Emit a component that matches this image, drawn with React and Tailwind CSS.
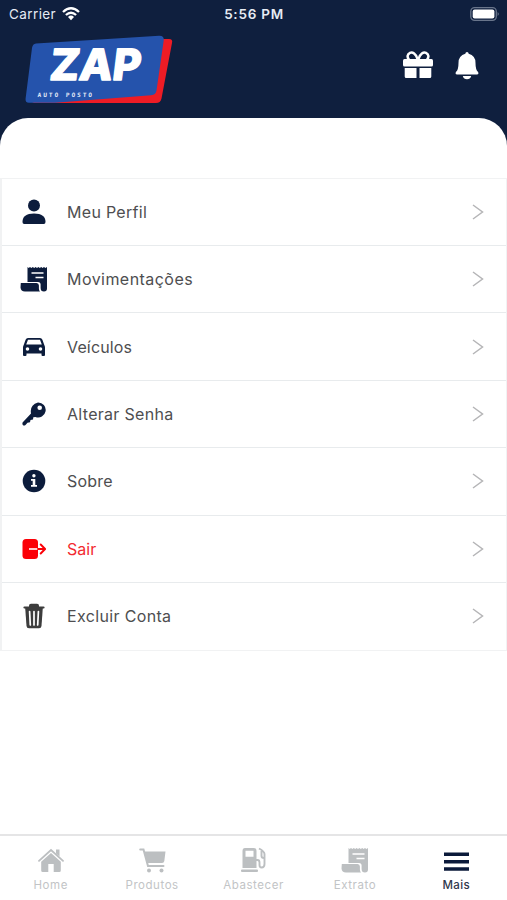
function Svg({ w, h, children, className }) {
  return (
    <svg width={w} height={h} viewBox={`0 0 ${w} ${h}`} className={`block ${className || ""}`} fill="currentColor">
      {children}
    </svg>
  );
}

function Logo() {
  return (
    <svg width="150" height="72" viewBox="24 33 150 72" className="block" fontFamily="Inter, sans-serif">
      <path d="M150 39H169Q173 39 172 43L161.500 98.500Q160.500 103 156 103H32L40 99Z" fill="#ee1c25" />
      <path d="M36 43.500L159 35.700Q164.500 35.500 163.700 40.500L156.500 90.500Q155.800 95 151 95.200L55 102.700H29Q25 102.700 25.600 98.500L32 48Q32.600 43.800 36 43.500Z" fill="#2553ac" />
      <text transform="translate(48.500 80.300) skewX(-7)" fontSize="43" fontWeight="800" fill="#fff" stroke="#fff" strokeWidth="1.400" strokeLinejoin="round" textLength="91" lengthAdjust="spacingAndGlyphs">ZAP</text>
      <text transform="translate(37.500 97.200) skewX(-3)" fontFamily="'DejaVu Sans Mono', monospace" fontSize="6" fontWeight="700" fill="#e4ebf8" textLength="54.500" lengthAdjust="spacing">AUTO POSTO</text>
    </svg>
  );
}

function Person() {
  return (
    <Svg w={24} h={26}>
      <circle cx="12" cy="6.500" r="6" />
      <path d="M.5 23Q.5 14.500 12 14.500Q23.500 14.500 23.500 23Q23.500 25 21.800 25H2.200Q.5 25 .5 23Z" />
    </Svg>
  );
}

function Key() {
  return (
    <Svg w={24} h={24}>
      <path fillRule="evenodd" d="M16 .5A7.500 7.500 0 1 1 13.500 15L11.300 15.200L11 17.500L8.500 18L8 20.300L5.500 20.800L3.500 23Q2 24 .8 23Q0 21.500 .8 20.300L9 11.500Q7.500 3 16 .5ZM17.700 3.500A2.300 2.300 0 1 0 17.700 8.100A2.300 2.300 0 1 0 17.700 3.500Z" />
    </Svg>
  );
}

function Receipt() {
  return (
    <Svg w={28} h={26}>
      <path d="M7.500 1l1.200 1 1.300-1 1.400 1 1.400-1 1.400 1 1.400-1 1.400 1 1.400-1 1.400 1 1.400-1 1.400 1 1.400-1 1.400 1L27 1V22.500Q27 25.500 24 25.500Q20.600 25.500 20.600 22V18.600Q20.600 16 18 16H7.500Z" />
      <path d="M.8 17H16.500Q18.900 17 18.900 19.500V22.500Q18.900 24.500 20 25.500H5Q.8 25.500.5 21.500Z" />
      <path d="M11.500 7H23.500M15.500 11.500H23.500" stroke="#fff" strokeWidth="1.600" />
    </Svg>
  );
}

function Car() {
  return (
    <Svg w={22} h={20}>
      <path fillRule="evenodd" d="M5 1H17Q18.700 1 19.400 2.700L21.300 8Q22 9 22 10.500V18Q22 19 21 19H19.500Q18.500 19 18.500 18V16.500H3.500V18Q3.500 19 2.500 19H1Q0 19 0 18V10.500Q0 9 .7 8L2.600 2.700Q3.300 1 5 1ZM5 2.800L3.200 7.500H18.800L17 2.800ZM4.500 10.200A1.800 1.800 0 1 0 4.500 13.800A1.800 1.800 0 1 0 4.500 10.200ZM17.500 10.200A1.800 1.800 0 1 0 17.500 13.800A1.800 1.800 0 1 0 17.500 10.200Z" />
    </Svg>
  );
}

function Info() {
  return (
    <Svg w={24} h={24}>
      <circle cx="12" cy="12" r="11.300" />
      <circle cx="11.900" cy="6.800" r="1.700" fill="#fff" />
      <path d="M9 10H13.300V16H15V17.800H9V16H10.700V11.800H9Z" fill="#fff" />
    </Svg>
  );
}

function Exit() {
  return (
    <Svg w={24} h={22}>
      <path d="M4 1H12.500Q16 1 16 4.500V17.500Q16 21 12.500 21H4Q.5 21 .5 17.500V4.500Q.5 1 4 1Z" />
      <path d="M7 11H16" stroke="#fff" strokeWidth="1.600" />
      <path d="M16 11H23M18.700 6.500L23.100 11L18.700 15.500" fill="none" stroke="currentColor" strokeWidth="1.900" strokeLinecap="round" strokeLinejoin="round" />
    </Svg>
  );
}

function Trash() {
  return (
    <Svg w={22} h={26}>
      <path d="M6 4V2.500Q6 .7 8 .7H14Q16 .7 16 2.500V4Z" />
      <path d="M1.500 4.500H20.500" fill="none" stroke="currentColor" strokeWidth="2.200" strokeLinecap="round" />
      <path d="M2.200 5H19.800L18.500 23Q18.300 25.300 16 25.300H6Q3.700 25.300 3.500 23Z" />
      <path d="M6.600 8.500L7.300 22M11 8.500V22M15.400 8.500L14.700 22" stroke="#fff" strokeWidth="1.700" strokeLinecap="round" />
    </Svg>
  );
}

function Bell() {
  return (
    <Svg w={24} h={28}>
      <path d="M12 0Q13.500 0 13.700 1.800Q20.500 3.500 20.500 11Q20.500 18 23.100 20Q24 22.500 22 22.500H2Q0 22.500.9 20Q3.500 18 3.500 11Q3.500 3.500 10.300 1.800Q10.500 0 12 0Z" />
      <path d="M7.800 24H16.200Q15.300 27.300 12 27.300Q8.700 27.300 7.800 24Z" />
    </Svg>
  );
}

function Gift() {
  return (
    <Svg w={30} h={28}>
      <path d="M14.500 8C13 2.500 9.500.8 7 1.800C4 3.200 4 6.500 6 8.500M15.500 8C17 2.500 20.500.8 23 1.800C26 3.200 26 6.500 24 8.500" fill="none" stroke="currentColor" strokeWidth="2.500" />
      <rect y="8" width="30" height="7.500" rx="1.500" />
      <path d="M1.700 17H13.500V27H3.200Q1.700 27 1.700 25.500ZM16.500 17H28.300V25.500Q28.300 27 26.800 27H16.500Z" />
    </Svg>
  );
}

function Home() {
  return (
    <Svg w={26} h={25}>
      <path d="M1 12.800L13 2L25 12.800" fill="none" stroke="currentColor" strokeWidth="1.800" strokeLinecap="round" />
      <path d="M18 1.500H21.500V8.500L18 5.500ZM13 5L22.800 13.700V22.500Q22.800 24 21.300 24H15.700V16H10.300V24H4.700Q3.200 24 3.200 22.500V13.700Z" />
    </Svg>
  );
}

function Cart() {
  return (
    <Svg w={27} h={25}>
      <path d="M1.200 1.500H4.500L9 18H24.500" fill="none" stroke="currentColor" strokeWidth="2" strokeLinecap="round" />
      <path d="M5.200 3.500H26.500L25.300 13Q25 15 23 15H8Z" />
      <circle cx="10" cy="22.500" r="2" />
      <circle cx="22.500" cy="22.500" r="2" />
    </Svg>
  );
}

function Pump() {
  return (
    <Svg w={25} h={26}>
      <path fillRule="evenodd" d="M4 1H12.500Q15.500 1 15.500 4V21H1.500V4Q1.500 1 4 1ZM4.500 3.800V9.800H12.500V3.800Z" />
      <rect x="0" y="22.500" width="17" height="2.500" rx="1" />
      <path d="M15 13H16.500Q18.500 13 18.500 15.500V18Q18.500 20.500 20.600 20.500Q23.500 20.500 23.500 17V7Q23.500 4.500 18 1.500M20.500 4V9Q20.500 11 23 11" fill="none" stroke="currentColor" strokeWidth="1.900" />
    </Svg>
  );
}

function Menu() {
  return (
    <Svg w={25} h={20}>
      <path d="M0 .5H25V4H0ZM0 7.900H25V11.400H0ZM0 15.300H25V18.800H0Z" />
    </Svg>
  );
}

const items = [
  { label: "Meu Perfil", icon: <Person />, track: "tracking-[0.3px]" },
  { label: "Movimentações", icon: <Receipt />, track: "tracking-[0.45px]" },
  { label: "Veículos", icon: <Car />, track: "tracking-[0.15px]" },
  { label: "Alterar Senha", icon: <Key />, track: "tracking-[0.3px]" },
  { label: "Sobre", icon: <Info />, track: "tracking-[0.2px]" },
  { label: "Sair", icon: <Exit />, track: "", color: "text-[#fb0007]", text: "text-[#f22a30]" },
  { label: "Excluir Conta", icon: <Trash />, track: "tracking-[0.35px]", color: "text-[#3d3d3d]" },
];

const tabs = [
  { label: "Home", icon: <Home /> },
  { label: "Produtos", icon: <Cart /> },
  { label: "Abastecer", icon: <Pump /> },
  { label: "Extrato", icon: <Receipt /> },
  { label: "Mais", icon: <Menu />, active: true },
];

export default function App() {
  return (
    <div className="flex h-[900px] w-[507px] flex-col overflow-hidden bg-[#0f1f3e] font-['Inter',sans-serif]">
      <div className="grid h-7 shrink-0 grid-cols-3 items-center pl-[9px] pr-[7px] text-[13.5px] leading-7 text-[#e6ebf3]">
        <div className="flex items-center gap-1.5">
          <span className="tracking-[0.4px]">Carrier</span>
          <Svg w={18} h={14} className="text-white">
            <path d="M1 5Q9-2.500 17 5M3.900 8Q9 3.400 14.100 8" fill="none" stroke="currentColor" strokeWidth="2.300" />
            <path d="M6 10Q9 7.200 12 10L9 13.300Z" />
          </Svg>
        </div>
        <span className="-ml-px text-center font-semibold tracking-[0.75px]">5:56 PM</span>
        <Svg w={30} h={14} className="-mt-px justify-self-end">
          <rect x=".8" y=".7" width="25.500" height="12.600" rx="3.800" fill="none" stroke="#69758b" strokeWidth="1.300" />
          <rect x="2.700" y="2.600" width="21.700" height="8.800" rx="2" fill="#fff" />
          <path d="M27.600 5Q30 7 27.600 9Z" fill="#69758b" />
        </Svg>
      </div>
      <header className="flex h-[90px] shrink-0 items-start justify-between pl-6 pr-7 pt-[5px] text-white">
        <Logo />
        <div className="flex items-start gap-[22px] pt-[18px]">
          <Gift />
          <div className="pt-px">
            <Bell />
          </div>
        </div>
      </header>
      <main className="flex min-h-0 flex-1 flex-col rounded-t-[28px] bg-white">
        <ul className="mt-[59.5px] flex h-[473px] shrink-0 flex-col border border-l-2 border-[#f1f2f3]">
          {items.map((item, i) => (
            <li key={item.label} className={`flex flex-1 items-center pr-[22px] ${i ? "border-t border-[#e8ebed]" : ""}`}>
              <span className={`flex w-[63px] shrink-0 justify-center ${item.color || "text-[#0c1c3c]"}`}>{item.icon}</span>
              <span className={`flex-1 pl-[2px] text-[16px] ${item.track} ${item.text || "text-[#4e4e50]"}`}>{item.label}</span>
              <Svg w={12} h={16} className="text-[#b5b5b7]">
                <path d="M1 1L10.500 8L1 15" fill="none" stroke="currentColor" strokeWidth="1.500" />
              </Svg>
            </li>
          ))}
        </ul>
        <nav className="mt-auto flex h-[66px] shrink-0 border-t-2 border-[#e5e5e6]">
          {tabs.map((tab) => (
            <div key={tab.label} className={`flex flex-1 flex-col items-center pt-[11px] ${tab.active ? "text-[#0b1a3a]" : "text-[#bcbfc1]"}`}>
              <div className={`flex h-[26px] items-center ${tab.active ? "pt-1" : ""}`}>{tab.icon}</div>
              <span className={`mt-1 text-[11.5px] leading-4 ${tab.active ? "font-medium tracking-[0.4px] text-[#30384c]" : "tracking-[0.55px] text-[#c2c4c6]"}`}>{tab.label}</span>
            </div>
          ))}
        </nav>
      </main>
    </div>
  );
}
